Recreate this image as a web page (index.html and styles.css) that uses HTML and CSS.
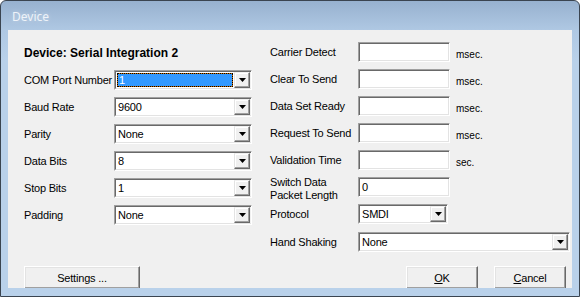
FILE: index.html
```html
<!DOCTYPE html>
<html>
<head>
<meta charset="utf-8">
<link rel="stylesheet" href="styles.css">
</head>
<body>
<div class="window">
  <div class="titlebar"><span class="title">Device</span></div>
  <div class="client">
    <div class="cols">
      <div class="col left">
        <div class="row heading">Device: Serial Integration 2</div>
        <div class="row"><span class="lbl">COM Port Number</span>
          <div class="combo"><div class="val sel">1</div><span class="drop"><svg width="7" height="4" viewBox="0 0 7 4"><polygon points="0,0 7,0 3.5,4" fill="#000"/></svg></span></div></div>
        <div class="row"><span class="lbl">Baud Rate</span>
          <div class="combo"><div class="val">9600</div><span class="drop"><svg width="7" height="4" viewBox="0 0 7 4"><polygon points="0,0 7,0 3.5,4" fill="#000"/></svg></span></div></div>
        <div class="row"><span class="lbl">Parity</span>
          <div class="combo"><div class="val">None</div><span class="drop"><svg width="7" height="4" viewBox="0 0 7 4"><polygon points="0,0 7,0 3.5,4" fill="#000"/></svg></span></div></div>
        <div class="row"><span class="lbl">Data Bits</span>
          <div class="combo"><div class="val">8</div><span class="drop"><svg width="7" height="4" viewBox="0 0 7 4"><polygon points="0,0 7,0 3.5,4" fill="#000"/></svg></span></div></div>
        <div class="row"><span class="lbl">Stop Bits</span>
          <div class="combo"><div class="val">1</div><span class="drop"><svg width="7" height="4" viewBox="0 0 7 4"><polygon points="0,0 7,0 3.5,4" fill="#000"/></svg></span></div></div>
        <div class="row"><span class="lbl">Padding</span>
          <div class="combo"><div class="val">None</div><span class="drop"><svg width="7" height="4" viewBox="0 0 7 4"><polygon points="0,0 7,0 3.5,4" fill="#000"/></svg></span></div></div>
      </div>
      <div class="col right">
        <div class="row"><span class="lbl rl">Carrier Detect</span><div class="edit"></div><span class="unit">msec.</span></div>
        <div class="row"><span class="lbl rl">Clear To Send</span><div class="edit"></div><span class="unit">msec.</span></div>
        <div class="row"><span class="lbl rl">Data Set Ready</span><div class="edit"></div><span class="unit">msec.</span></div>
        <div class="row"><span class="lbl rl">Request To Send</span><div class="edit"></div><span class="unit">msec.</span></div>
        <div class="row"><span class="lbl rl">Validation Time</span><div class="edit"></div><span class="unit">sec.</span></div>
        <div class="row"><span class="lbl rl two">Switch Data<br>Packet Length</span><div class="edit">0</div></div>
        <div class="row"><span class="lbl rl">Protocol</span>
          <div class="combo proto"><div class="val">SMDI</div><span class="drop"><svg width="7" height="4" viewBox="0 0 7 4"><polygon points="0,0 7,0 3.5,4" fill="#000"/></svg></span></div></div>
        <div class="row hs"><span class="lbl rl">Hand Shaking</span>
          <div class="combo wide"><div class="val">None</div><span class="drop"><svg width="7" height="4" viewBox="0 0 7 4"><polygon points="0,0 7,0 3.5,4" fill="#000"/></svg></span></div></div>
      </div>
    </div>
    <div class="footer">
      <button class="btn settings">Settings ...</button>
      <button class="btn ok"><u>O</u>K</button>
      <button class="btn cancel"><u>C</u>ancel</button>
    </div>
  </div>
</div>
</body>
</html>
```
FILE: styles.css
```css
html, body {
  margin: 0;
  padding: 0;
  background: #ffffff;
}
.window {
  box-sizing: border-box;
  width: 580px;
  height: 297px;
  border: 1px solid #3a4450;
  border-radius: 6px 6px 0 0;
  background: linear-gradient(to bottom, #97b1cf 0px, #afc8e3 29px, #b9d1ea 60px, #b9d1ea 100%);
  display: flex;
  flex-direction: column;
  overflow: hidden;
  font-family: "Liberation Sans", Arial, sans-serif;
  font-size: 11px;
  color: #000;
}
.titlebar {
  height: 29px;
  flex: none;
  display: flex;
  align-items: center;
  padding-left: 11px;
  padding-top: 2px;
  box-sizing: border-box;
}
.title {
  font-family: "Noto Sans", "Liberation Sans", sans-serif;
  font-size: 12px;
  color: #eef3f9;
  text-shadow: 0 0 5px rgba(255,255,255,0.4);
}
.client {
  margin: 0 7px;
  height: 258px;
  flex: none;
  background: #f0f0f0;
  display: flex;
  flex-direction: column;
  overflow: hidden;
}
.cols {
  display: flex;
}
.col {
  display: flex;
  flex-direction: column;
  gap: 7px;
  padding-top: 12px;
}
.left {
  padding-left: 16px;
  width: 228px;
}
.right {
  margin-left: 18px;
}
.row {
  height: 20px;
  display: flex;
  align-items: center;
  letter-spacing: -0.2px;
}
.row.hs {
  margin-top: 1px;
}
.heading {
  font-size: 12px;
  font-weight: bold;
  letter-spacing: 0;
  padding-top: 1px;
}
.lbl {
  width: 90px;
  flex: none;
  white-space: nowrap;
}
.lbl.rl {
  width: 88px;
}
.lbl.two {
  line-height: 13px;
  padding-top: 3px;
}
.combo, .edit {
  box-sizing: border-box;
  height: 20px;
  border-style: solid;
  border-width: 1px;
  border-color: #a0a0a0 #ffffff #ffffff #a0a0a0;
  display: flex;
  flex: none;
}
.combo {
  width: 138px;
}
.combo.proto {
  width: 90px;
}
.combo.wide {
  width: 212px;
}
.combo > .val, .edit {
  background: #fff;
}
.combo > .val {
  flex: 1;
  border-style: solid;
  border-width: 1px 0 1px 1px;
  border-color: #696969 transparent #e3e3e3 #696969;
  padding-left: 2px;
  line-height: 16px;
  height: 16px;
  box-sizing: content-box;
  position: relative;
}
.combo > .val.sel {
  color: #fff;
  padding-left: 3px;
  isolation: isolate;
}
.combo > .val.sel::before {
  content: "";
  position: absolute;
  left: 1px;
  top: 1px;
  right: 1px;
  bottom: 1px;
  border: 1px dotted #000;
  background: linear-gradient(#3399ff, #3399ff) padding-box, #c86a00 border-box;
  z-index: -1;
}
.drop {
  box-sizing: border-box;
  width: 17px;
  height: 18px;
  flex: none;
  background: #f0f0f0;
  border-style: solid;
  border-width: 1px 0 1px 0;
  border-color: #696969 transparent #e3e3e3 transparent;
  display: flex;
  align-items: center;
  justify-content: center;
  position: relative;
}
.drop::after {
  content: "";
  position: absolute;
  inset: 0 1px 0 0;
  border-style: solid;
  border-width: 1px;
  border-color: #f0f0f0 #696969 #696969 #e3e3e3;
  box-shadow: inset -1px -1px #a0a0a0, inset 1px 1px #ffffff;
}
.drop svg {
  position: relative;
  z-index: 1;
  margin-right: 1px;
  display: block;
}
.edit {
  width: 92px;
  box-shadow: inset 1px 1px #696969, inset -1px -1px #e3e3e3;
  padding-left: 3px;
  line-height: 18px;
}
.unit {
  font-size: 10px;
  letter-spacing: 0;
  margin-left: 6px;
  align-self: flex-end;
  line-height: 14px;
}
.footer {
  display: flex;
  margin-top: 14px;
  padding-left: 16px;
  padding-right: 6px;
}
.btn {
  box-sizing: border-box;
  height: 23px;
  background: #f0f0f0;
  border-style: solid;
  border-width: 1px;
  border-color: #ffffff #696969 #696969 #ffffff;
  box-shadow: inset -1px -1px #a0a0a0, inset 1px 1px #e3e3e3;
  font-family: "Liberation Sans", Arial, sans-serif;
  font-size: 11px;
  letter-spacing: -0.2px;
  color: #000;
  padding: 0;
  margin: 0;
  flex: none;
}
.btn u {
  text-decoration: underline;
}
.settings {
  width: 116px;
}
.ok {
  width: 72px;
  margin-left: auto;
}
.cancel {
  width: 72px;
  margin-left: 16px;
}
```
